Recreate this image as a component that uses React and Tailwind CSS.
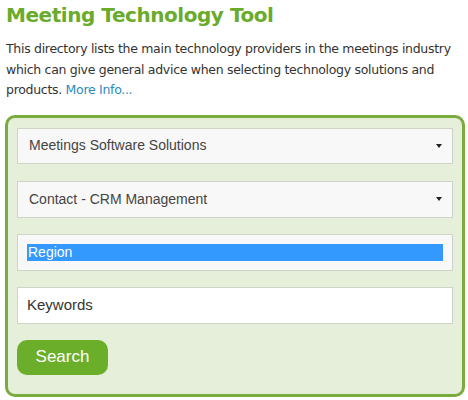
export default function App() {
  return (
    <div className="w-[468px] h-[400px] bg-white px-[6px] pt-[1px]" style={{ fontFamily: '"DejaVu Sans", Verdana, sans-serif' }}>
      <h1 className="text-[20px] leading-[28px] font-bold tracking-[-0.45px] text-[#6aab2b]">Meeting Technology Tool</h1>
      <p className="mt-[10px] mr-[-6px] text-[12.5px] leading-[20.5px] tracking-[-0.3px] text-[#333]">
        This directory lists the main technology providers in the meetings industry<br />
        which can give general advice when selecting technology solutions and<br />
        products.{" "}
        <a href="#" className="text-[#2a8bbd]">More Info...</a>
      </p>
      <form className="mt-[14px] ml-[-1px] w-[460px] h-[282px] rounded-[10px] border-[3px] border-[#7aab3e] bg-[#e5efd9] px-[9px] pt-[10px]" style={{ fontFamily: '"Liberation Sans", Arial, sans-serif' }}>
        <div className="h-[36px] w-[436px] border border-[#cfd4c9] bg-[#f8f8f8] flex items-center justify-between pl-[11px] pr-[10px] text-[14px] text-[#444]">
          <span>Meetings Software Solutions</span>
          <span className="w-0 h-0 border-l-[3px] border-r-[3px] border-t-[4px] border-l-transparent border-r-transparent border-t-[#222]" />
        </div>
        <div className="mt-[17px] h-[37px] w-[436px] border border-[#cfd4c9] bg-[#f8f8f8] flex items-center justify-between pl-[11px] pr-[10px] text-[14px] text-[#444]">
          <span>Contact - CRM Management</span>
          <span className="w-0 h-0 border-l-[3px] border-r-[3px] border-t-[4px] border-l-transparent border-r-transparent border-t-[#222]" />
        </div>
        <div className="mt-[16px] h-[37px] w-[436px] border border-[#cfd4c9] bg-[#f8f8f8] flex items-center pl-[9px] pr-[9px]">
          <div className="h-[17px] w-full bg-[#3399ff] text-white text-[14px] leading-[17px] pl-[1px]">Region</div>
        </div>
        <div className="mt-[16px] h-[37px] w-[436px] border border-[#cfd4c9] bg-white flex items-center pl-[9px] text-[15px] text-[#333]">
          Keywords
        </div>
        <button type="button" className="mt-[16px] h-[35px] w-[91px] rounded-[10px] bg-[#6aae2a] text-white text-[17px]">
          Search
        </button>
      </form>
    </div>
  );
}
